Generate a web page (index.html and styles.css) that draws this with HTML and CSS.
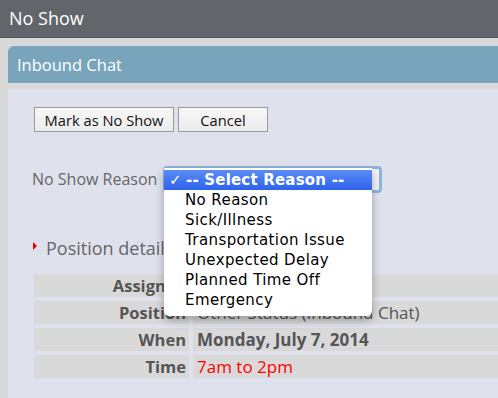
FILE: index.html
```html
<!DOCTYPE html>
<html lang="en">
<head>
    <meta charset="UTF-8">
    <meta name="viewport" content="width=device-width, initial-scale=1.0">
    <title>No Show</title>
    <link rel="stylesheet" href="styles.css">
</head>
<body>

    <div class="topbar">No Show</div>

    <div class="panel">
        <div class="panel-head">Inbound Chat</div>
        <div class="panel-body">
            <div class="actions">
                <button class="btn btn-wide">Mark as No Show</button>
                <button class="btn btn-cancel">Cancel</button>
            </div>

            <div class="reason-row">
                <span class="reason-label">No Show Reason</span>
                <div class="select-wrap">
                    <div class="select-box"></div>
                    <!-- open dropdown list -->
                    <ul class="menu">
                        <li class="selected"><span class="check">✓</span>-- Select Reason --</li>
                        <li>No Reason</li>
                        <li>Sick/Illness</li>
                        <li>Transportation Issue</li>
                        <li>Unexpected Delay</li>
                        <li>Planned Time Off</li>
                        <li>Emergency</li>
                    </ul>
                </div>
            </div>

            <div class="details-title">
                <span class="arrow"></span>Position details
            </div>

            <div class="details">
                <div class="row">
                    <div class="key">Assigned</div>
                    <div class="val">Other Warm</div>
                </div>
                <div class="row">
                    <div class="key">Position</div>
                    <div class="val">Other Status (Inbound Chat)</div>
                </div>
                <div class="row">
                    <div class="key">When</div>
                    <div class="val bold">Monday, July 7, 2014</div>
                </div>
                <div class="row">
                    <div class="key">Time</div>
                    <div class="val red">7am to 2pm</div>
                </div>
            </div>
        </div>
    </div>

</body>
</html>
```

FILE: styles.css
```css
* {
    margin: 0;
    padding: 0;
    box-sizing: border-box;
}

body {
    background: #d8d8d8;
    font-family: "Open Sans", Arial, sans-serif;
    color: #555;
    overflow: hidden;
}

.topbar {
    height: 38px;
    background: #62666b;
    border-bottom: 1px solid #4f5256;
    color: #fff;
    font-size: 18px;
    line-height: 37px;
    padding-left: 9px;
}

.panel {
    margin: 8px 0 0 8px;
}

.panel-head {
    height: 37px;
    background: #78a5bb;
    border-radius: 6px 0 0 0;
    color: #fff;
    font-size: 16.5px;
    line-height: 37px;
    padding-left: 9px;
}

.panel-body {
    margin-top: 6px;
    background: #dfe1ed;
    height: 320px;
    padding: 18px 0 0 26px;
}

.actions {
    display: flex;
    gap: 4px;
}

.btn {
    height: 25px;
    font-family: "Open Sans", Arial, sans-serif;
    font-size: 14.7px;
    color: #111;
    background: linear-gradient(to bottom, #f7f7f7, #ececec);
    border: 1px solid #9a9a9a;
    cursor: pointer;
}

.btn-wide {
    width: 140px;
}

.btn-cancel {
    width: 90px;
}

.reason-row {
    display: flex;
    align-items: center;
    margin-top: 34px;
    height: 26px;
}

.reason-label {
    font-size: 16px;
    color: #666;
    margin-left: -2px;
    width: 131px;
}

.select-wrap {
    position: relative;
}

.select-box {
    width: 219px;
    height: 27px;
    border: 3px solid #8eb5dc;
    border-radius: 4px;
    background: #f4f4f4;
}

.menu {
    position: absolute;
    left: 1px;
    top: 2px;
    width: 208px;
    background: #fff;
    list-style: none;
    border-radius: 0 0 5px 5px;
    box-shadow: 0 4px 10px rgba(0, 0, 0, 0.3);
    padding: 2px 0 6px;
    font-family: "DejaVu Sans", sans-serif;
    font-size: 15px;
    letter-spacing: 0.4px;
    color: #000;
}

.menu li {
    height: 20px;
    line-height: 20px;
    padding-left: 21px;
}

.menu li.selected {
    background: linear-gradient(to bottom, #5a8cf6, #2e62ec);
    color: #fff;
    font-weight: bold;
    letter-spacing: 0.2px;
    padding-left: 5px;
}

.check {
    display: inline-block;
    width: 17px;
    font-weight: normal;
}

.details-title {
    display: flex;
    align-items: center;
    margin-top: 44px;
    font-size: 18px;
    color: #666;
}

.arrow {
    width: 0;
    height: 0;
    border-top: 4px solid transparent;
    border-bottom: 4px solid transparent;
    border-left: 4px solid #e00;
    margin: 0 9px 5px -1px;
}

.details {
    margin-top: 14px;
    display: flex;
    flex-direction: column;
    gap: 4px;
}

.row {
    display: flex;
    gap: 4px;
    height: 23px;
}

.key {
    width: 155px;
    background: #d9d9d9;
    text-align: right;
    font-weight: bold;
    font-size: 16.5px;
    line-height: 23px;
    padding-right: 3px;
}

.val {
    flex: 1;
    background: #d9d9d9;
    font-size: 17px;
    line-height: 23px;
    padding-left: 4px;
}

.bold {
    font-weight: bold;
}

.red {
    color: #f00;
}
```
